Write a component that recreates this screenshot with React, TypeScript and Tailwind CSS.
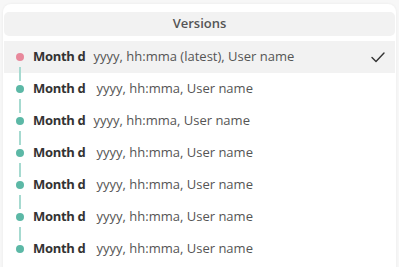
const versions = [
  { date: "Month d", rest: "yyyy, hh:mma (latest), User name", gap: "ml-[8px]", latest: true },
  { date: "Month d", rest: "yyyy, hh:mma, User name", gap: "ml-[11px]" },
  { date: "Month d", rest: "yyyy, hh:mma, User name", gap: "ml-[8px]" },
  { date: "Month d", rest: "yyyy, hh:mma, User name", gap: "ml-[11px]" },
  { date: "Month d", rest: "yyyy, hh:mma, User name", gap: "ml-[11px]" },
  { date: "Month d", rest: "yyyy, hh:mma, User name", gap: "ml-[11px]" },
  { date: "Month d", rest: "yyyy, hh:mma, User name", gap: "ml-[11px]" },
];

function VersionRow({ v, first, last }: { v: (typeof versions)[number]; first: boolean; last: boolean }) {
  return (
    <div className={`flex h-[32px] items-stretch pr-[10px] ${v.latest ? "bg-[#f2f2f2]" : ""}`}>
      <div className="ml-[12px] flex w-[8px] flex-col items-center">
        <div className={`h-[8px] w-[2px] ${first ? "" : "bg-[#a6dad0]"}`} />
        <div className={`mt-[4px] h-[8px] w-[8px] rounded-full ${v.latest ? "bg-[#e8889b]" : "bg-[#5cb8a6]"}`} />
        <div className={`mt-[6px] w-[2px] flex-1 ${last ? "" : "bg-[#a6dad0]"}`} />
      </div>
      <div className="flex flex-1 items-center">
        <span className="ml-[9px] text-[13px] font-bold tracking-[-0.3px] text-[#333]">{v.date}</span>
        <span className={`${v.gap} text-[13px] text-[#555]`}>{v.rest}</span>
      </div>
      {v.latest && (
        <div className="flex items-center">
          <svg width="14" height="11" viewBox="0 0 14 11" fill="none">
            <path d="M1 5.5 L5 9.5 L13 1" stroke="#333" strokeWidth="1.4" strokeLinecap="round" strokeLinejoin="round" />
          </svg>
        </div>
      )}
    </div>
  );
}

export default function App() {
  return (
    <div className="h-[267px] w-[399px] overflow-hidden bg-[#f7f7f7] pt-[4px] font-['Open_Sans',sans-serif]">
      <div className="mx-[3px] h-[300px] rounded-[8px] bg-white px-[1px] pt-[8px] shadow-[0_0_3px_rgba(0,0,0,0.06)]">
        <div className="flex h-[24px] items-center justify-center rounded-[5px] bg-[#f2f2f2] text-[13px] font-semibold text-[#555]">
          Versions
        </div>
        <div className="mt-[5px] flex flex-col">
          {versions.map((v, i) => (
            <VersionRow key={i} v={v} first={i === 0} last={i === versions.length - 1} />
          ))}
        </div>
      </div>
    </div>
  );
}
